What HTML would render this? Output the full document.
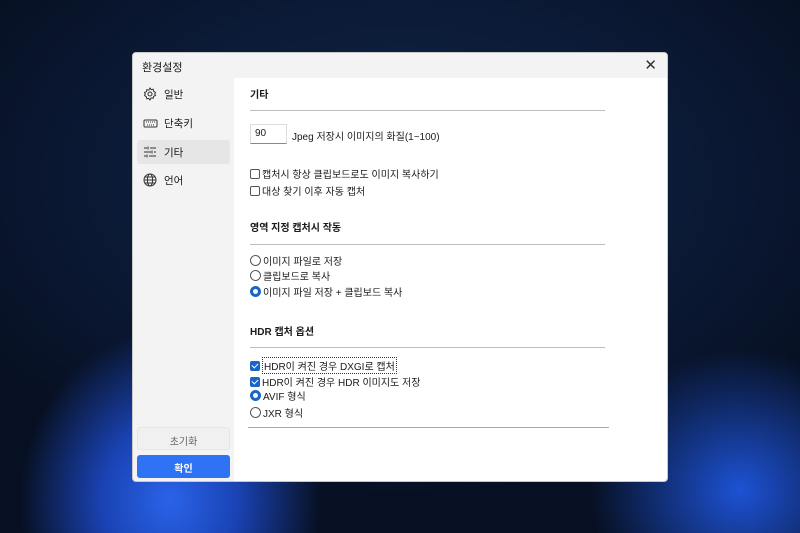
<!DOCTYPE html><html><head><meta charset="utf-8"><style>
*{margin:0;padding:0;box-sizing:border-box}
body{width:800px;height:533px;overflow:hidden;position:relative;font-family:"Liberation Sans","Noto Sans CJK KR",sans-serif;font-size:10px;color:#1a1a1a;
background:radial-gradient(ellipse 150px 170px at 170px 500px,#2a63e8 0%,#1a43b5 45%,rgba(10,30,80,0) 100%),radial-gradient(ellipse 150px 140px at 740px 490px,#1d52d5 0%,rgba(10,30,80,0) 100%),radial-gradient(ellipse 500px 320px at 400px 180px,#102749,#0a1731 70%,#071022);}
.dlg{position:absolute;left:132px;top:52px;width:536px;height:430px;background:#fff;border:1px solid #c8c8c8;border-radius:4px;overflow:hidden}
.title{height:25px;background:#f3f3f3;padding:6px 9px;font-size:11px;position:relative}
.x{position:absolute;right:10px;top:3px;font-size:15px;color:#333}
.side{position:absolute;left:0;top:25px;width:101px;bottom:0;background:#f3f3f3}
.it{position:absolute;left:4px;width:93px;height:24px;padding:5px 0 0 27px;font-size:10.5px;border-radius:3px}
.it.sel{background:#e6e6e6}
.ic{position:absolute;left:6px;top:5px}
.btn{position:absolute;left:4px;width:93px;height:23px;border-radius:3px;text-align:center;padding-top:5px;font-size:10px}
.main{position:absolute;left:102px;top:25px;right:0;bottom:0}
.h{position:absolute;left:15px;font-weight:bold;font-size:10px}
.ln{position:absolute;left:15px;height:1px;background:#bdbdbd}
.row{position:absolute;left:15px;font-size:10px;display:flex;align-items:center;gap:2px}
.cb{width:10px;height:10px;border:1px solid #555;border-radius:2px;background:#fff}
.cb.on{background:#1a64c8;border-color:#1a64c8;position:relative}
.cb.on:after{content:"";position:absolute;left:2px;top:0px;width:3px;height:5px;border:solid #fff;border-width:0 1.3px 1.3px 0;transform:rotate(45deg)}
.rd{width:11px;height:11px;border:1px solid #555;border-radius:50%;background:#fff}
.rd.on{border:3px solid #1a64c8}
</style></head><body>
<div class="dlg">
<div class="title">환경설정<span class="x">✕</span></div>
<div class="side">
<div class="it" style="top:4px"><svg class="ic" width="14" height="14" viewBox="0 0 14 14" fill="none" stroke="#333" stroke-width="1"><circle cx="7" cy="7" r="2"/><path d="M7 1l1.2 1.6 2-.4.4 2L12.5 5.5 11.7 7l.8 1.5-1.9.8-.4 2-2-.4L7 13l-1.2-1.6-2 .4-.4-2L1.5 8.5 2.3 7 1.5 5.5l1.9-.8.4-2 2 .4z"/></svg>일반</div>
<div class="it" style="top:33px"><svg class="ic" width="15" height="14" viewBox="0 0 15 14" fill="none" stroke="#333" stroke-width="1"><rect x="1" y="4" width="13" height="7" rx="1"/><path d="M3 6h1M5 6h1M7 6h1M9 6h1M11 6h1M4 9h7" stroke-dasharray="1 1"/></svg>단축키</div>
<div class="it sel" style="top:62px"><svg class="ic" width="14" height="14" viewBox="0 0 14 14" fill="none" stroke="#333" stroke-width="1"><path d="M1 3h3M7 3h6M5 1.5v3M1 7h7M11 7h2M9 5.5v3M1 11h2M6 11h7M4 9.5v3"/></svg>기타</div>
<div class="it" style="top:90px"><svg class="ic" width="14" height="14" viewBox="0 0 14 14" fill="none" stroke="#333" stroke-width="1"><circle cx="7" cy="7" r="6"/><ellipse cx="7" cy="7" rx="2.6" ry="6"/><path d="M1 7h12M2 4h10M2 10h10"/></svg>언어</div>
<div class="btn" style="top:349px;background:#f0f0f0;border:1px solid #e6e6e6;color:#666">초기화</div>
<div class="btn" style="top:377px;background:#2f73f5;color:#fff;font-weight:bold">확인</div>
</div>
<div class="main">
<div class="h" style="top:8px">기타</div>
<div class="ln" style="top:32px;width:355px"></div>
<div style="position:absolute;left:15px;top:46px;width:37px;height:20px;border:1px solid #ddd;border-bottom:1px solid #888;padding:3px 4px;font-size:10px">90</div>
<div class="row" style="top:50px;left:57px">Jpeg 저장시 이미지의 화질(1~100)</div>
<div class="row" style="top:88px"><span class="cb"></span>캡처시 항상 클립보드로도 이미지 복사하기</div>
<div class="row" style="top:105px"><span class="cb"></span>대상 찾기 이후 자동 캡처</div>
<div class="h" style="top:141px">영역 지정 캡처시 작동</div>
<div class="ln" style="top:166px;width:355px"></div>
<div class="row" style="top:175px"><span class="rd"></span>이미지 파일로 저장</div>
<div class="row" style="top:190px"><span class="rd"></span>클립보드로 복사</div>
<div class="row" style="top:206px"><span class="rd on"></span>이미지 파일 저장 + 클립보드 복사</div>
<div class="h" style="top:245px">HDR 캡처 옵션</div>
<div class="ln" style="top:269px;width:355px"></div>
<div class="row" style="top:279px"><span class="cb on"></span><span style="border:1px dotted #333;padding:0 1px">HDR이 켜진 경우 DXGI로 캡처</span></div>
<div class="row" style="top:296px"><span class="cb on"></span>HDR이 켜진 경우 HDR 이미지도 저장</div>
<div class="row" style="top:310px"><span class="rd on"></span>AVIF 형식</div>
<div class="row" style="top:327px"><span class="rd"></span>JXR 형식</div>
<div class="ln" style="top:349px;width:361px;left:13px;background:#aaa"></div>
</div>
</div>
</body></html>
